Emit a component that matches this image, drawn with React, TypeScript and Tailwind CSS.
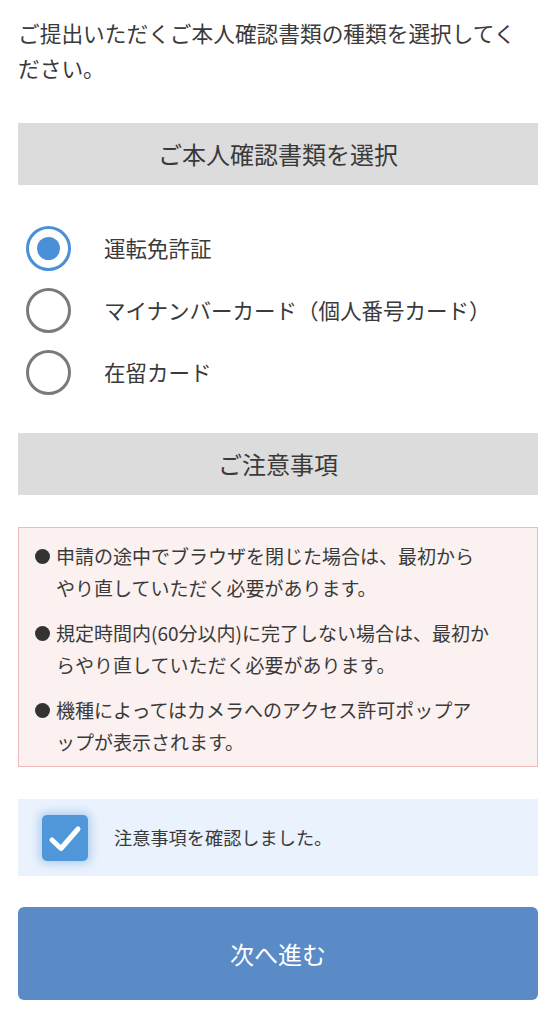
import React, { useState } from "react";

const font = { fontFamily: '"Noto Sans CJK JP", "Noto Sans", sans-serif' };

const options = ["運転免許証", "マイナンバーカード（個人番号カード）", "在留カード"];

const notes: string[][] = [
  ["申請の途中でブラウザを閉じた場合は、最初から", "やり直していただく必要があります。"],
  ["規定時間内(60分以内)に完了しない場合は、最初か", "らやり直していただく必要があります。"],
  ["機種によってはカメラへのアクセス許可ポップア", "ップが表示されます。"],
];

function SectionHeader({ title }: { title: string }) {
  return (
    <div className="h-[62px] bg-[#dcdcdc] flex items-center justify-center text-[24px] text-[#3a3a3a]">
      {title}
    </div>
  );
}

export default function App() {
  const [selected, setSelected] = useState(0);
  const [agreed, setAgreed] = useState(true);

  return (
    <div className="w-[556px] bg-white px-[18px] pt-[15px] pb-6 text-[#3a3a3a]" style={font}>
      <p className="text-[21.7px] leading-[35px]">
        ご提出いただくご本人確認書類の種類を選択してく
        <br />
        ださい。
      </p>

      <div className="mt-[38px]">
        <SectionHeader title="ご本人確認書類を選択" />
      </div>

      <div className="mt-[40px] flex flex-col gap-4 pl-[8px]">
        {options.map((label, i) => (
          <button
            key={label}
            onClick={() => setSelected(i)}
            className="flex items-center h-[46px] text-left"
          >
            <span
              className={
                i === selected
                  ? "w-[45px] h-[45px] rounded-full border-[3px] border-[#4a90d9] flex items-center justify-center"
                  : "w-[45px] h-[45px] rounded-full border-[3px] border-[#7a7a7a] flex items-center justify-center"
              }
            >
              {i === selected && <span className="w-[23px] h-[23px] rounded-full bg-[#4a90d9]" />}
            </span>
            <span className="ml-[33px] text-[21.5px] text-[#3a3a3a]">{label}</span>
          </button>
        ))}
      </div>

      <div className="mt-[38px]">
        <SectionHeader title="ご注意事項" />
      </div>

      <div className="mt-[32px] h-[240px] border border-[#efbaba] bg-[#fbf1f0] pl-[16px] pr-3 pt-[12px] flex flex-col gap-[13px]">
        {notes.map((lines, i) => (
          <div key={i} className="flex text-[19px] leading-[32px] text-[#3a3a3a]">
            <span className="w-[21px] shrink-0 flex items-center h-[32px]">
              <span className="w-[15px] h-[15px] rounded-full bg-[#333]" />
            </span>
            <span className="whitespace-nowrap">
              {lines[0]}
              <br />
              {lines[1]}
            </span>
          </div>
        ))}
      </div>

      <div className="mt-[32px] h-[77px] bg-[#eaf2fd] flex items-center pl-[24px]">
        <button
          onClick={() => setAgreed(!agreed)}
          className={
            agreed
              ? "w-[46px] h-[46px] rounded-[5px] bg-[#4f97d9] shadow-[0_0_8px_3px_rgba(74,144,217,0.35)] flex items-center justify-center"
              : "w-[46px] h-[46px] rounded-[5px] bg-white border-2 border-[#999] flex items-center justify-center"
          }
        >
          {agreed && (
            <svg width="36" height="36" viewBox="0 0 36 36" fill="none">
              <path
                d="M5 20 L14 28.5 L31 9"
                stroke="white"
                strokeWidth="5"
                strokeLinecap="round"
                strokeLinejoin="round"
              />
            </svg>
          )}
        </button>
        <span className="ml-[26px] text-[18.2px] text-[#3a3a3a]">注意事項を確認しました。</span>
      </div>

      <button className="mt-[31px] w-full h-[93px] rounded-[6px] bg-[#5a8bc6] text-white text-[24px] flex items-center justify-center">
        次へ進む
      </button>
    </div>
  );
}
